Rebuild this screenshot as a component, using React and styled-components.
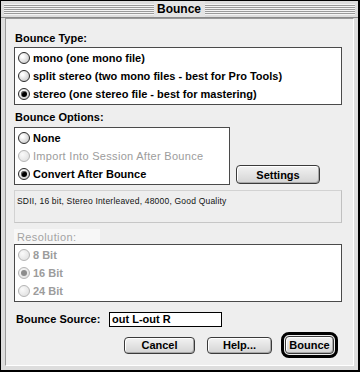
import React from "react";
import styled, { createGlobalStyle } from "styled-components";

const GlobalStyle = createGlobalStyle`
  html, body {
    margin: 0;
    padding: 0;
    background: #000;
  }
  * {
    box-sizing: border-box;
  }
`;

const Window = styled.div`
  width: 360px;
  height: 372px;
  display: flex;
  flex-direction: column;
  background: #dddddd;
  border: 1px solid #000;
  border-right-width: 2px;
  border-bottom-width: 2px;
  font-family: "Liberation Sans", Arial, sans-serif;
  font-size: 11px;
  font-weight: bold;
  color: #000;
`;

const TitleBar = styled.div`
  height: 17px;
  display: flex;
  align-items: center;
  padding: 0 3px;
  background: #dddddd;
  border-bottom: 1px solid #8a8a8a;
`;

const Stripes = styled.div`
  flex: 1;
  height: 11px;
  background: repeating-linear-gradient(
    to bottom,
    #f4f4f4 0 1px,
    #9a9a9a 1px 2px
  );
`;

const Title = styled.div`
  padding: 0 4px 0 3px;
  font-size: 12px;
  line-height: 16px;
  background: #e4e4e4;
`;

const Frame = styled.div`
  flex: 1;
  display: flex;
  padding: 0 4px 4px 4px;
`;

const Panel = styled.div`
  flex: 1;
  display: flex;
  flex-direction: column;
  background: #eeeeee;
  border: 1px solid #9a9a9a;
  border-right-color: #ffffff;
  border-bottom-color: #ffffff;
  padding: 12px 11px 0 8px;
`;

const Label = styled.div`
  height: 14px;
  line-height: 14px;
  padding-left: 1px;
  margin-top: ${(p) => p.$top || 0}px;
`;

const ListBox = styled.div`
  width: ${(p) => p.$width || "100%"};
  margin-top: ${(p) => p.$top || 0}px;
  background: #ffffff;
  border: 1px solid #4a4a4a;
  padding: 1px 0;
`;

const Row = styled.div`
  height: 18px;
  display: flex;
  align-items: center;
  gap: 3px;
  padding-left: 3px;
  color: ${(p) => (p.$disabled ? "#9c9c9c" : "#000")};
  letter-spacing: ${(p) => (p.$spaced ? "0.3px" : "0")};
  font-weight: ${(p) => (p.$spaced ? "normal" : "bold")};
  white-space: nowrap;
`;

const RadioDot = styled.span`
  width: 12px;
  height: 12px;
  flex: none;
  border-radius: 50%;
  border: 1px solid ${(p) => (p.$disabled ? "#b4b4b4" : "#2a2a2a")};
  background: ${(p) =>
    p.$disabled
      ? "radial-gradient(circle at 35% 35%, #fafafa, #dcdcdc)"
      : "radial-gradient(circle at 35% 35%, #ffffff 10%, #c4c4c4 90%)"};
  display: flex;
  align-items: center;
  justify-content: center;

  &::after {
    content: "";
    display: ${(p) => (p.$checked ? "block" : "none")};
    width: 6px;
    height: 6px;
    border-radius: 50%;
    background: ${(p) => (p.$disabled ? "#8c8c8c" : "#000")};
    box-shadow: ${(p) =>
      p.$disabled ? "none" : "inset 1px 1px 0 rgba(255,255,255,0.35)"};
  }
`;

const Radio = ({ label, checked, disabled, spaced }) => (
  <Row $disabled={disabled} $spaced={spaced}>
    <RadioDot $checked={checked} $disabled={disabled} />
    {label}
  </Row>
);

const OptionsRow = styled.div`
  display: flex;
  align-items: flex-end;
  gap: 6px;
  margin-top: 3px;
`;

const Button = styled.button`
  width: ${(p) => p.$width}px;
  height: ${(p) => p.$height || 18}px;
  margin-bottom: ${(p) => p.$bottom || 0}px;
  padding: 0;
  border: 1px solid #3a3a3a;
  border-radius: 4px;
  background: linear-gradient(to bottom, #f2f2f2, #d4d4d4);
  box-shadow: inset 1px 1px 0 #ffffff, inset -1px -1px 0 #a8a8a8;
  font-family: "Liberation Sans", Arial, sans-serif;
  font-size: 11px;
  font-weight: bold;
  color: #000;
`;

const DefaultRing = styled.div`
  display: flex;
  padding: 1px;
  border: 3px solid #000;
  border-radius: 8px;
`;

const InfoBox = styled.div`
  height: 33px;
  margin-top: 5px;
  padding: 5px 0 0 2px;
  border: 1px solid #d2d2d2;
  border-right-color: #c0c0c0;
  border-bottom-color: #c6c6c6;
  font-size: 8.5px;
  font-weight: normal;
  line-height: 10px;
  letter-spacing: 0.2px;
  color: #111;
`;

const GroupLabel = styled.div`
  width: 86px;
  height: 16px;
  margin-top: 6px;
  margin-bottom: -1px;
  padding: 1px 0 0 3px;
  background: #f7f7f7;
  color: #a4a4a4;
  font-weight: normal;
  letter-spacing: 0.4px;
  line-height: 14px;
`;

const SourceRow = styled.div`
  display: flex;
  align-items: center;
  height: 16px;
  margin-top: 9px;
`;

const SourceLabel = styled.div`
  width: 95px;
  padding-left: 2px;
`;

const SourceInput = styled.div`
  width: 113px;
  height: 15px;
  border: 1px solid #000;
  background: #fff;
  padding-left: 2px;
  line-height: 13px;
`;

const ButtonRow = styled.div`
  display: flex;
  justify-content: flex-end;
  align-items: center;
  margin-top: 5px;
  margin-right: 4px;
`;

const Spacer = styled.div`
  width: ${(p) => p.$w}px;
`;

export default function App() {
  return (
    <>
      <GlobalStyle />
      <Window>
        <TitleBar>
          <Stripes />
          <Title>Bounce</Title>
          <Stripes />
        </TitleBar>
        <Frame>
          <Panel>
            <Label>Bounce Type:</Label>
            <ListBox $top={2}>
              <Radio label="mono (one mono file)" />
              <Radio label="split stereo (two mono files - best for Pro Tools)" />
              <Radio label="stereo (one stereo file - best for mastering)" checked />
            </ListBox>

            <Label $top={5}>Bounce Options:</Label>
            <OptionsRow>
              <ListBox $width="216px">
                <Radio label="None" />
                <Radio label="Import Into Session After Bounce" disabled spaced />
                <Radio label="Convert After Bounce" checked />
              </ListBox>
              <Button $width={84} $height={19} $bottom={1}>
                Settings
              </Button>
            </OptionsRow>

            <InfoBox>SDII, 16 bit, Stereo Interleaved, 48000, Good Quality</InfoBox>

            <GroupLabel>Resolution:</GroupLabel>
            <ListBox>
              <Radio label="8 Bit" disabled />
              <Radio label="16 Bit" disabled checked />
              <Radio label="24 Bit" disabled />
            </ListBox>

            <SourceRow>
              <SourceLabel>Bounce Source:</SourceLabel>
              <SourceInput>out L-out R</SourceInput>
            </SourceRow>

            <ButtonRow>
              <Button $width={71} $height={17}>Cancel</Button>
              <Spacer $w={12} />
              <Button $width={65} $height={17}>Help...</Button>
              <Spacer $w={9} />
              <DefaultRing>
                <Button $width={49} $height={18}>Bounce</Button>
              </DefaultRing>
            </ButtonRow>
          </Panel>
        </Frame>
      </Window>
    </>
  );
}
